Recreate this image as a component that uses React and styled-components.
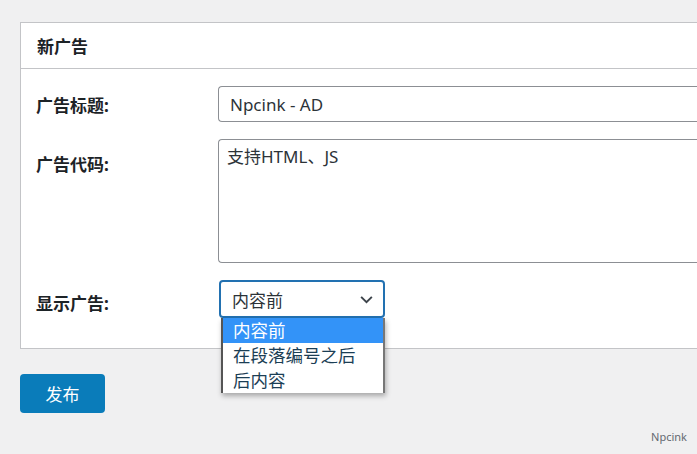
import React, { useState } from "react";
import styled, { createGlobalStyle } from "styled-components";

const GlobalStyle = createGlobalStyle`
    html, body {
        margin: 0;
        padding: 0;
        background: #f0f0f1;
        overflow: hidden;
    }
    body {
        font-family: "Noto Sans", "Noto Sans CJK SC", sans-serif;
        color: #1d2327;
    }
`
const Page = styled.div`
    width: 697px;
    height: 454px;
    padding: 22px 0 0 20px;
    box-sizing: border-box;
    position: relative;
    overflow: hidden;
`
const Card = styled.div`
    width: 677px;
    background: #fff;
    border: 1px solid #c3c4c7;
    border-right: none;
    box-sizing: border-box;
`
const CardHeader = styled.h2`
    margin: 0;
    height: 45px;
    padding-left: 16px;
    display: flex;
    align-items: center;
    font-size: 17px;
    font-weight: 700;
    color: #1d2327;
    border-bottom: 1px solid #c3c4c7;
`
const Form = styled.div`
    padding: 17px 0 30px 15px;
    display: flex;
    flex-direction: column;
    gap: 17px;
`
const Row = styled.div`
    display: flex;
    align-items: ${props => props.align || "center"};
`
const Label = styled.label`
    width: 182px;
    flex-shrink: 0;
    font-size: 17px;
    font-weight: 700;
    color: #1d2327;
    padding-top: ${props => props.top || 0}px;
`
const TextInput = styled.div`
    flex: 1;
    height: 36px;
    box-sizing: border-box;
    border: 1px solid #8c8f94;
    border-right: none;
    border-radius: 4px 0 0 4px;
    padding: 0 11px;
    display: flex;
    align-items: center;
    font-size: 17px;
    color: #2c3338;
`
const TextArea = styled.div`
    flex: 1;
    height: 124px;
    box-sizing: border-box;
    border: 1px solid #8c8f94;
    border-right: none;
    border-radius: 4px 0 0 4px;
    padding: 5px 8px;
    font-size: 17px;
    line-height: 24px;
    color: #2c3338;
`
const SelectWrap = styled.div`
    position: relative;
    margin-left: 1px;
`
const SelectBox = styled.div`
    width: 166px;
    height: 38px;
    box-sizing: border-box;
    border: 2px solid #2271b1;
    border-radius: 4px;
    padding: 0 9px 0 11px;
    display: flex;
    align-items: center;
    justify-content: space-between;
    font-size: 17px;
    color: #2c3338;
    cursor: pointer;
`
const Options = styled.ul`
    position: absolute;
    top: 38px;
    left: 2px;
    width: 164px;
    margin: 0;
    padding: 0;
    list-style: none;
    background: #fff;
    border-left: 2px solid #555;
    border-right: 2px solid #777;
    box-sizing: border-box;
    box-shadow: 1px 3px 5px rgba(0, 0, 0, 0.3);
    z-index: 2;
`
const Option = styled.li`
    height: 25px;
    line-height: 25px;
    padding-left: 10px;
    font-size: 17.5px;
    background: ${props => props.active ? "#3393f8" : "#fff"};
    color: ${props => props.active ? "#fff" : "#1b3e55"};
`
const PublishButton = styled.button`
    margin-top: 25px;
    width: 85px;
    height: 39px;
    border: none;
    border-radius: 4px;
    background: #0a7cba;
    color: #fff;
    font-family: inherit;
    font-size: 17px;
    cursor: pointer;
`
const Footer = styled.div`
    position: absolute;
    right: 10px;
    bottom: 10px;
    font-size: 11px;
    color: #646970;
`

const OPTIONS = ["内容前", "在段落编号之后", "后内容"];

export default function App() {
    const [selected, setSelected] = useState(0);

    return (
        <Page>
            <GlobalStyle />
            <Card>
                <CardHeader>新广告</CardHeader>
                <Form>
                    <Row>
                        <Label>广告标题:</Label>
                        <TextInput>Npcink - AD</TextInput>
                    </Row>
                    <Row align="flex-start">
                        <Label top={12}>广告代码:</Label>
                        <TextArea>支持HTML、JS</TextArea>
                    </Row>
                    <Row>
                        <Label top={6}>显示广告:</Label>
                        <SelectWrap>
                            <SelectBox>
                                <span>{OPTIONS[selected]}</span>
                                <svg width="15" height="15" viewBox="0 0 14 14" fill="none">
                                    <path d="M2 4.5 L7 9.5 L12 4.5" stroke="#3c434a" strokeWidth="1.8" />
                                </svg>
                            </SelectBox>
                            <Options>
                                {OPTIONS.map((o, i) => (
                                    <Option key={o} active={i === selected} onClick={() => setSelected(i)}>{o}</Option>
                                ))}
                            </Options>
                        </SelectWrap>
                    </Row>
                </Form>
            </Card>
            <PublishButton>发布</PublishButton>
            <Footer>Npcink</Footer>
        </Page>
    )
}
